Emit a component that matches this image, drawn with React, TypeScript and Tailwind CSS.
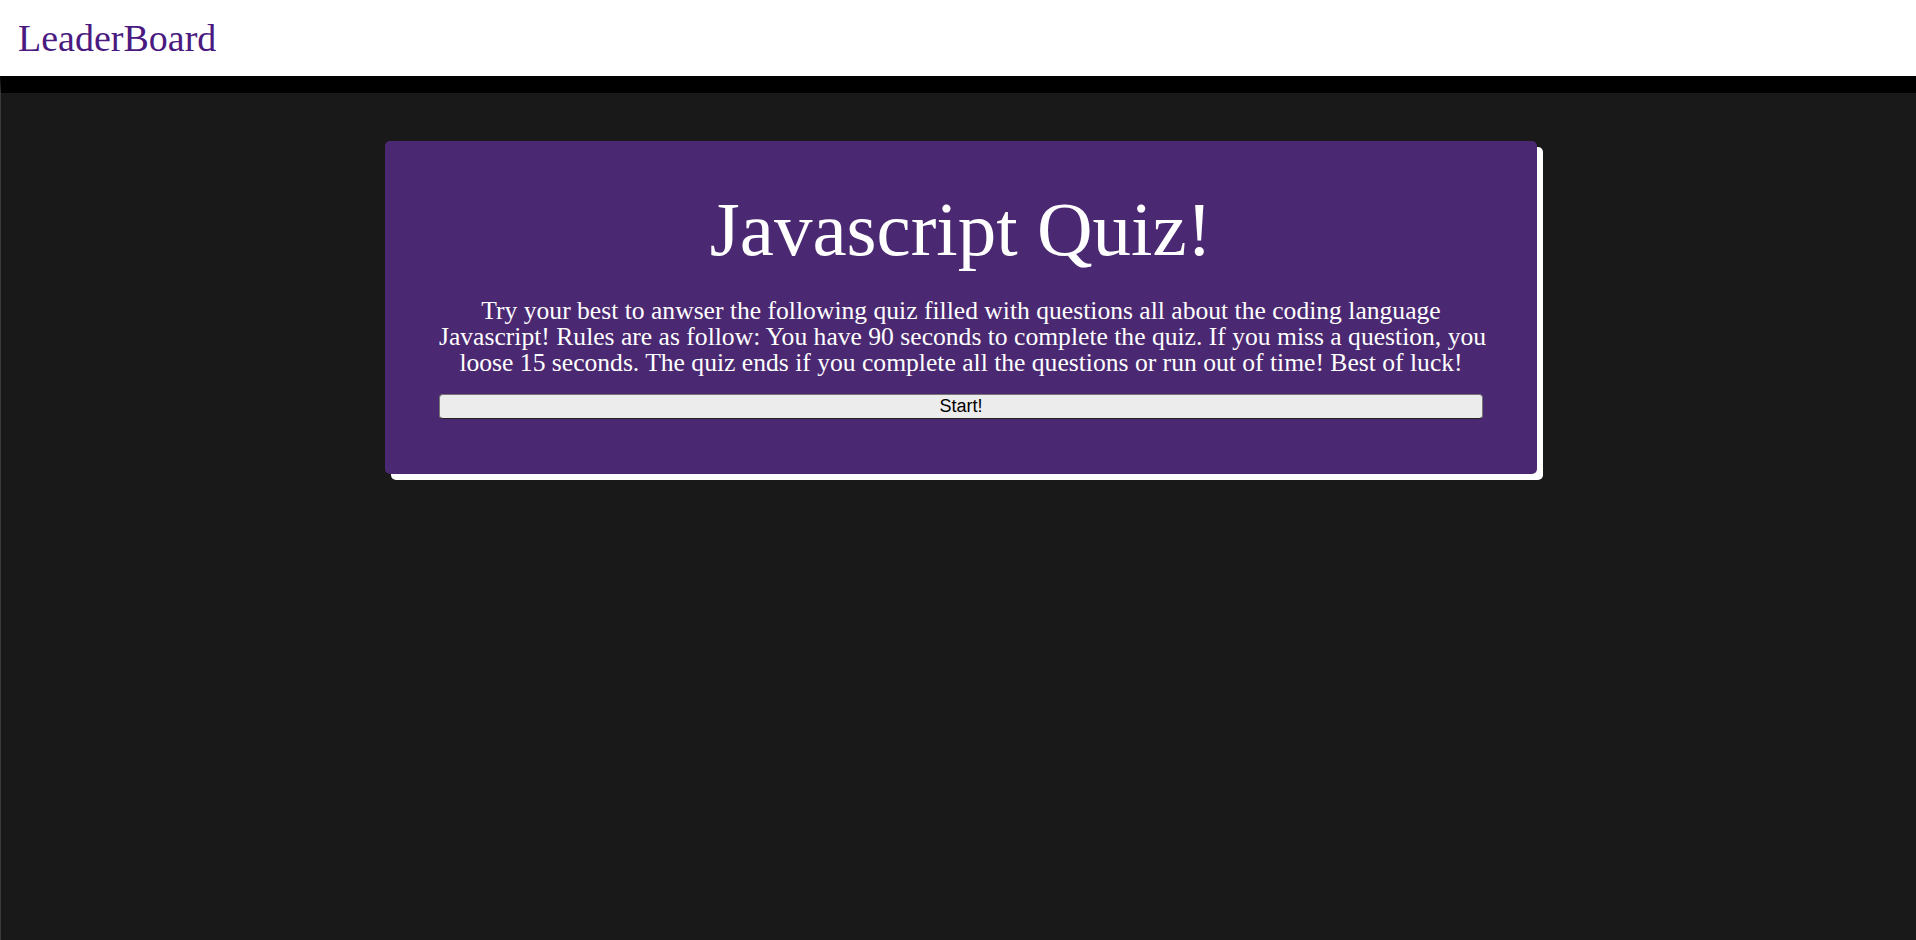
import React from 'react';

const serif = { fontFamily: '"Liberation Serif", "Times New Roman", serif' };

const Header: React.FC = () => (
  <header className="h-[76px] bg-white flex items-center px-[18px]">
    <a href="#" className="text-[38px] leading-none text-[#4a1a80]" style={serif}>
      LeaderBoard
    </a>
  </header>
);

const QuizCard: React.FC = () => (
  <section
    className="ml-[384px] w-[1152px] rounded-[5px] bg-[#4b2872] px-[54px] pt-[44px] pb-[55px] text-center text-white shadow-[6px_6px_0_#ffffff]"
    style={serif}
  >
    <h1 className="text-[77px] leading-[1.15]">Javascript Quiz!</h1>
    <p className="mt-[24px] text-[25.6px] leading-[26px] whitespace-nowrap">
      Try your best to anwser the following quiz filled with questions all about the coding language
      <br />
      Javascript! Rules are as follow: You have 90 seconds to complete the quiz. If you miss a question, you
      <br />
      loose 15 seconds. The quiz ends if you complete all the questions or run out of time! Best of luck!
    </p>
    <button
      className="mt-[18px] block w-full h-[25px] rounded-[4px] border border-[#767676] border-b-[#222] bg-[#ececec] text-[18px] leading-none text-black"
      style={{ fontFamily: '"Liberation Sans", Arial, sans-serif' }}
    >
      Start!
    </button>
  </section>
);

export default function App() {
  return (
    <div className="min-h-screen flex flex-col bg-[#191919]">
      <Header />
      <main className="flex-1 border-t-[17px] border-t-black border-l border-l-[#3a3a3a] pt-[48px]">
        <QuizCard />
      </main>
    </div>
  );
}
